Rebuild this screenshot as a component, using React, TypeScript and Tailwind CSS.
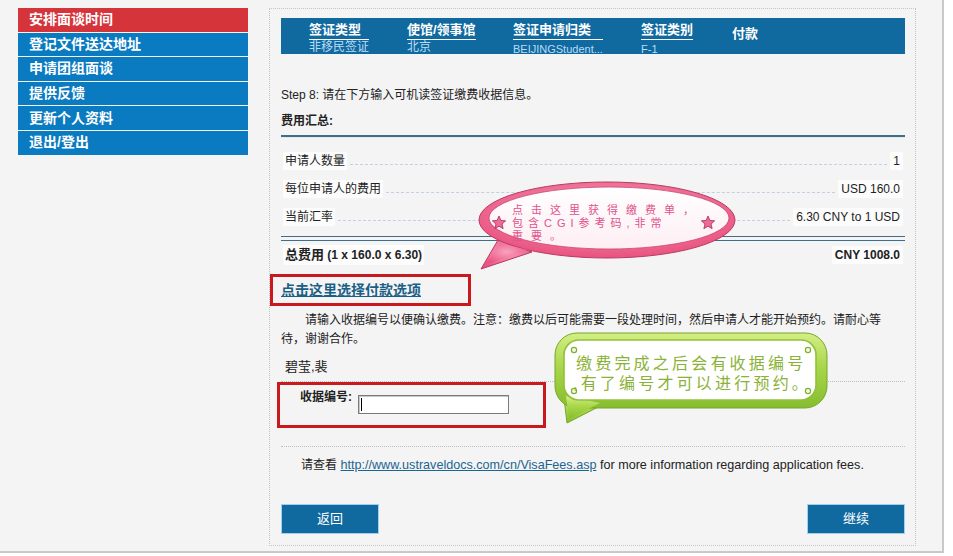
import React from 'react';

const font = "font-['Liberation_Sans','Noto_Sans_CJK_SC',sans-serif]";

const menu = ['安排面谈时间', '登记文件送达地址', '申请团组面谈', '提供反馈', '更新个人资料', '退出/登出'];

const steps = [
  { label: '签证类型', value: '非移民签证', w: 'w-[98px]', small: false },
  { label: '使馆/领事馆', value: '北京', w: 'w-[106px]', small: false },
  { label: '签证申请归类', value: 'BEIJINGStudent...', w: 'w-[128px]', small: true },
  { label: '签证类别', value: 'F-1', w: 'w-[91px]', small: true },
];

const FeeRow: React.FC<{ label: string; value: string }> = ({ label, value }) => (
  <div className="flex h-[28px] items-center px-[2px]">
    <span className="bg-[#fcfcfc] px-[2px] leading-[18px]">{label}</span>
    <span className="mx-[3px] mt-[7px] flex-1 border-t border-dashed border-[#c3cfe2]" />
    <span className="bg-[#fcfcfc] px-[3px] leading-[18px]">{value}</span>
  </div>
);

const Star: React.FC<{ x: number; y: number }> = ({ x, y }) => {
  const pts: string[] = [];
  for (let i = 0; i < 10; i++) {
    const r = i % 2 === 0 ? 7 : 3.2;
    const a = -Math.PI / 2 + (i * Math.PI) / 5;
    pts.push(`${(x + r * Math.cos(a)).toFixed(2)},${(y + r * Math.sin(a)).toFixed(2)}`);
  }
  return <polygon points={pts.join(' ')} fill="#ec6c98" stroke="#b8345f" strokeWidth="0.9" strokeLinejoin="round" />;
};

export default function App() {
  return (
    <div className={`relative h-[556px] w-[953px] overflow-hidden bg-white text-[12px] text-[#222] ${font}`}>
      <div className="flex h-[553px] w-[944px] items-start border-r-2 border-b-2 border-[#c9c9c9] bg-[#f4f4f4] pt-[8px] pl-[18px]">
        {/* sidebar */}
        <div className="flex w-[230px] flex-col">
          {menu.map((m, i) => (
            <div
              key={m}
              className={`mb-[1px] flex h-[23.6px] items-center pl-[11px] text-[14px] font-bold text-white ${
                i === 0 ? 'bg-[#d5343b]' : 'bg-[#0b7bc1]'
              }`}
            >
              {m}
            </div>
          ))}
        </div>

        {/* main panel */}
        <div className="ml-[21px] h-[538px] w-[647px] border border-dotted border-[#c4c4c4] pt-[9px] pr-[10px] pl-[11px]">
          {/* steps bar */}
          <div className="flex h-[36px] bg-[#10699f] pl-[28px] text-white">
            {steps.map((s) => (
              <div key={s.label} className={`${s.w} pt-[3px]`}>
                <div className="inline-flex flex-col">
                  <span className="border-b border-white pb-[2px] text-[13px] leading-[15px] font-bold">{s.label}</span>
                  <span
                    className={`leading-[14px] text-[#b9ddf6] ${
                      s.small ? "pt-[2px] font-['Liberation_Sans',sans-serif] text-[11px]" : 'text-[12px]'
                    }`}
                  >
                    {s.value}
                  </span>
                </div>
              </div>
            ))}
            <div className="pt-[8px] text-[13px] leading-[15px] font-bold">付款</div>
          </div>

          <div className="mt-[33px] leading-[16px]">Step 8: 请在下方输入可机读签证缴费收据信息。</div>
          <div className="mt-[10px] leading-[16px] font-bold">费用汇总:</div>
          <div className="mt-[6px] border-t-2 border-b border-t-[#3f6f87] border-b-[#dceaf4]" />

          <div className="mt-[9px]">
            <FeeRow label="申请人数量" value="1" />
            <FeeRow label="每位申请人的费用" value="USD 160.0" />
            <FeeRow label="当前汇率" value="6.30 CNY to 1 USD" />
          </div>

          <div className="mt-[5px] h-[5px] border-t border-b border-[#3f6f87]" />
          <div className="mt-[4px] flex h-[20px] items-center justify-between px-[2px] font-bold">
            <span className="bg-[#fcfcfc] px-[2px]">
              <span className="text-[13px]">总费用</span> (1 x 160.0 x 6.30)
            </span>
            <span className="bg-[#fcfcfc] px-[3px]">CNY 1008.0</span>
          </div>

          <div className="mt-[15px] leading-[20px]">
            <a className="text-[14px] font-bold text-[#1b5f87] underline">点击这里选择付款选项</a>
          </div>

          <p className="mt-[10px] w-[606px] indent-[24px] leading-[19px]">
            请输入收据编号以便确认缴费。注意：缴费以后可能需要一段处理时间，然后申请人才能开始预约。请耐心等待，谢谢合作。
          </p>

          <div className="mt-[8px] pl-[4px] text-[13px] leading-[19px]">碧莹,裴</div>

          <div className="mt-[5px] border-t border-dotted border-[#bdbdbd]" />
          <div className="mt-[7px] flex items-start pl-[19px]">
            <span className="mt-[1px] font-bold leading-[14px]">收据编号:</span>
            <div className="relative mt-[6px] ml-[6px] h-[19px] w-[151px] border border-[#7b7b7b] bg-white shadow-[inset_1px_1px_0_#c8c8c8]">
              <span className="absolute top-[2px] left-[2px] h-[13px] w-[1px] bg-black" />
            </div>
          </div>

          <div className="mt-[32px] border-t border-dotted border-[#bdbdbd]" />
          <div className="mt-[10px] pl-[20px] text-[12.6px] leading-[16px]">
            <span className="text-[12px]">请查看</span>{' '}
            <a className="text-[#1b6591] underline">http://www.ustraveldocs.com/cn/VisaFees.asp</a> for more
            information regarding application fees.
          </div>

          <div className="mt-[31px] flex justify-between">
            <button className="h-[30px] w-[98px] border border-[#9fd0f0] bg-[#10699f] text-[13px] text-white">返回</button>
            <button className="h-[30px] w-[98px] border border-[#9fd0f0] bg-[#10699f] text-[13px] text-white">继续</button>
          </div>
        </div>
      </div>

      {/* annotation boxes */}
      <div className="pointer-events-none absolute top-[274px] left-[270px] h-[32px] w-[201px] border-[3px] border-[#c8191f]" />
      <div className="pointer-events-none absolute top-[382px] left-[277px] h-[46px] w-[269px] border-[3px] border-[#c8191f]" />

      {/* speech bubbles */}
      <svg className="pointer-events-none absolute top-0 left-0" width="953" height="556" viewBox="0 0 953 556">
        <defs>
          <radialGradient id="pink" cx="50%" cy="40%" r="60%">
            <stop offset="0%" stopColor="#f9a3c0" />
            <stop offset="100%" stopColor="#e9527f" />
          </radialGradient>
          <linearGradient id="pinkIn" x1="0" y1="0" x2="0" y2="1">
            <stop offset="0%" stopColor="#ffffff" />
            <stop offset="100%" stopColor="#fdeef3" />
          </linearGradient>
          <linearGradient id="green" x1="0" y1="0" x2="0" y2="1">
            <stop offset="0%" stopColor="#d4ee85" />
            <stop offset="45%" stopColor="#a9d64a" />
            <stop offset="100%" stopColor="#86bd2e" />
          </linearGradient>
        </defs>

        {/* pink */}
        <path d="M498 240 L481 269 L532 252 Z" fill="url(#pink)" stroke="#b93a64" strokeWidth="1" strokeLinejoin="round" />
        <ellipse cx="607" cy="220" rx="128" ry="38" fill="url(#pink)" stroke="#b93a64" strokeWidth="1" />
        <path d="M500 243 L485 265 L528 250 Z" fill="url(#pink)" />
        <ellipse cx="609" cy="218" rx="120" ry="31" fill="url(#pinkIn)" stroke="#c8466f" strokeWidth="0.8" />
        <Star x={499} y={223} />
        <Star x={708} y={223} />

        {/* green */}
        <path d="M564 398 L567 423 L604 404 Z" fill="url(#green)" stroke="#77a62a" strokeWidth="1" strokeLinejoin="round" />
        <rect x="555" y="333" width="272" height="75" rx="22" fill="url(#green)" stroke="#77a62a" strokeWidth="1" />
        <path d="M566 396 L569 419 L600 403 Z" fill="url(#green)" />
        <rect x="564" y="340" width="252" height="60" rx="15" fill="#ffffff" stroke="#8fc23a" strokeWidth="1.6" />
        {[
          [574, 350],
          [808, 350],
          [574, 391],
          [808, 391],
        ].map(([cx, cy]) => (
          <circle key={`${cx}-${cy}`} cx={cx} cy={cy} r="2.6" fill="#f4fbe4" stroke="#7fb02e" strokeWidth="1.2" />
        ))}
      </svg>

      <div className="pointer-events-none absolute top-[204px] left-[512px] text-[11px] leading-[13px] tracking-[8px] text-[#e0528a]">
        <div>点击这里获得缴费单，</div>
        <div className="tracking-[5px]">包含CGI参考码,非常</div>
        <div>重要。</div>
      </div>

      <div className="pointer-events-none absolute top-[354px] left-[576px] text-[16px] leading-[20px] tracking-[3.2px] text-[#8ab236]">
        <div>缴费完成之后会有收据编号</div>
        <div className="-ml-[3px]">,有了编号才可以进行预约。</div>
      </div>
    </div>
  );
}
